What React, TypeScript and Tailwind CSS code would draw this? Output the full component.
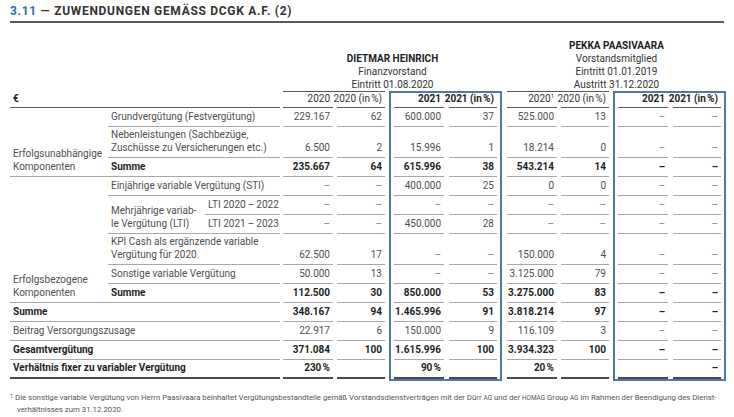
const H = [
  "h-[19px]",
  "h-[31px]",
  "h-[19px]",
  "h-[19px]",
  "h-[19px]",
  "h-[19px]",
  "h-[31px]",
  "h-[19px]",
  "h-[19px]",
  "h-[19px]",
  "h-[19px]",
  "h-[19px]",
  "h-[19px]",
];
const BOLD = [false, false, true, false, false, false, false, false, true, true, false, true, true];

const line = "border-b border-[#a8a8a8]";
const lastLine = "border-b-2 border-[#4a4a4a]";
const PCT = "2020 (in\u202F%)";
const PCT21 = "2021 (in\u202F%)";

const cols = {
  dh2020: ["229.167", "6.500", "235.667", "–", "–", "–", "62.500", "50.000", "112.500", "348.167", "22.917", "371.084", "230\u202F%"],
  dh2020p: ["62", "2", "64", "–", "–", "–", "17", "13", "30", "94", "6", "100", ""],
  dh2021: ["600.000", "15.996", "615.996", "400.000", "–", "450.000", "–", "–", "850.000", "1.465.996", "150.000", "1.615.996", "90\u202F%"],
  dh2021p: ["37", "1", "38", "25", "–", "28", "–", "–", "53", "91", "9", "100", ""],
  pp2020: ["525.000", "18.214", "543.214", "0", "–", "–", "150.000", "3.125.000", "3.275.000", "3.818.214", "116.109", "3.934.323", "20\u202F%"],
  pp2020p: ["13", "0", "14", "0", "–", "–", "4", "79", "83", "97", "3", "100", ""],
  pp2021: ["–", "–", "–", "–", "–", "–", "–", "–", "–", "–", "–", "–", ""],
  pp2021p: ["–", "–", "–", "–", "–", "–", "–", "–", "–", "–", "–", "–", "–"],
};

function NumCol({
  head,
  values,
  boldHead = false,
  inBox = false,
  width = "w-[50px]",
}: {
  head: React.ReactNode;
  values: string[];
  boldHead?: boolean;
  inBox?: boolean;
  width?: string;
}) {
  return (
    <div className={`flex flex-col ${width}`}>
      <div
        className={`flex items-end justify-end pr-[3px] pb-[2px] whitespace-nowrap border-b border-[#5a5a5a] ${
          inBox ? "h-[15px]" : "h-[16px]"
        } ${boldHead ? "font-bold text-[#1e1e1e]" : "text-[#333]"}`}
      >
        {head}
      </div>
      {values.map((v, i) => (
        <div
          key={i}
          className={`${H[i]} flex items-end justify-end pr-[3px] pb-[3px] whitespace-nowrap ${i === 12 ? lastLine : line} ${
            BOLD[i] ? "font-bold text-[#1e1e1e]" : v === "–" ? "text-[#8a8a8a]" : "text-[#4f4f4f]"
          }`}
        >
          {v}
        </div>
      ))}
    </div>
  );
}

function Box({ a, b }: { a: string[]; b: string[] }) {
  return (
    <div className="flex gap-[5px] px-[3px] border-2 border-[#4f7aa8]">
      <NumCol head="2021" values={a} boldHead inBox />
      <NumCol head={PCT21} values={b} boldHead inBox width="w-[48px]" />
    </div>
  );
}

function LabelCell({
  h,
  children,
  bold = false,
  last = false,
}: {
  h: string;
  children: React.ReactNode;
  bold?: boolean;
  last?: boolean;
}) {
  return (
    <div
      className={`${h} flex items-end pl-[3px] pb-[3px] whitespace-nowrap ${last ? lastLine : line} ${
        bold ? "font-bold text-[#1e1e1e]" : "text-[#4f4f4f]"
      }`}
    >
      <div>{children}</div>
    </div>
  );
}

export default function App() {
  return (
    <div className="w-[734px] h-[417px] bg-white overflow-hidden font-[Roboto,sans-serif] text-[10px] leading-[13px] text-[#555]">
      <div className="px-[10px] pt-[4px]">
        <div className="border-b-2 border-[#5a5a5a] pb-[3px] text-[12px] leading-[14px] font-bold tracking-[0.7px] text-[#333]">
          <span className="text-[#2f6ea6]">3.11</span> — ZUWENDUNGEN GEMÄSS DCGK A.F. (2)
        </div>
      </div>

      <div className="flex pl-[10px]">
        {/* labels */}
        <div className="flex flex-col w-[270px]">
          <div className="h-[68px]" />
          <div className="h-[17px] flex items-end pl-[3px] pb-[2px] border-b border-[#5a5a5a] font-bold text-[#1e1e1e]">
            €
          </div>
          <div className="flex">
            <div className="w-[98px]">
              <LabelCell h="h-[69px]">
                Erfolgsunabhängige
                <br />
                Komponenten
              </LabelCell>
            </div>
            <div className="flex flex-col flex-1">
              <LabelCell h={H[0]}>Grundvergütung (Festvergütung)</LabelCell>
              <LabelCell h={H[1]}>
                Nebenleistungen (Sachbezüge,
                <br />
                Zuschüsse zu Versicherungen etc.)
              </LabelCell>
              <LabelCell h={H[2]} bold>
                Summe
              </LabelCell>
            </div>
          </div>
          <div className="flex">
            <div className="w-[98px]">
              <LabelCell h="h-[126px]">
                Erfolgsbezogene
                <br />
                Komponenten
              </LabelCell>
            </div>
            <div className="flex flex-col flex-1">
              <LabelCell h={H[3]}>Einjährige variable Vergütung (STI)</LabelCell>
              <div className="flex">
                <div className="w-[97px]">
                  <LabelCell h="h-[38px]">
                    Mehrjährige variab-
                    <br />
                    le Vergütung (LTI)
                  </LabelCell>
                </div>
                <div className="flex flex-col flex-1">
                  <LabelCell h={H[4]}>LTI 2020{"\u2009–\u2009"}2022</LabelCell>
                  <LabelCell h={H[5]}>LTI 2021{"\u2009–\u2009"}2023</LabelCell>
                </div>
              </div>
              <LabelCell h={H[6]}>
                KPI Cash als ergänzende variable
                <br />
                Vergütung für 2020
              </LabelCell>
              <LabelCell h={H[7]}>Sonstige variable Vergütung</LabelCell>
              <LabelCell h={H[8]} bold>
                Summe
              </LabelCell>
            </div>
          </div>
          <LabelCell h={H[9]} bold>
            Summe
          </LabelCell>
          <LabelCell h={H[10]}>Beitrag Versorgungszusage</LabelCell>
          <LabelCell h={H[11]} bold>
            Gesamtvergütung
          </LabelCell>
          <LabelCell h={H[12]} bold last>
            Verhältnis fixer zu variabler Vergütung
          </LabelCell>
        </div>

        {/* Dietmar Heinrich */}
        <div className="flex flex-col w-[219px] ml-[3px]">
          <div className="h-[68px] flex flex-col items-center justify-end text-[#333]">
            <div className="font-bold text-[#1e1e1e]">DIETMAR HEINRICH</div>
            <div>Finanzvorstand</div>
            <div>Eintritt 01.08.2020</div>
          </div>
          <div className="flex gap-[4px]">
            <div className="flex gap-[4px] border-t border-[#5a5a5a]">
              <NumCol head="2020" values={cols.dh2020} />
              <NumCol head={PCT} values={cols.dh2020p} width="w-[48px]" />
            </div>
            <Box a={cols.dh2021} b={cols.dh2021p} />
          </div>
        </div>

        {/* Pekka Paasivaara */}
        <div className="flex flex-col w-[219px] ml-[5px]">
          <div className="h-[68px] flex flex-col items-center justify-end text-[#333]">
            <div className="font-bold text-[#1e1e1e]">PEKKA PAASIVAARA</div>
            <div>Vorstandsmitglied</div>
            <div>Eintritt 01.01.2019</div>
            <div>Austritt 31.12.2020</div>
          </div>
          <div className="flex gap-[4px]">
            <div className="flex gap-[4px] border-t border-[#5a5a5a]">
              <NumCol
                head={
                  <span>
                    2020<span className="text-[6px] align-top leading-[8px]">1</span>
                  </span>
                }
                values={cols.pp2020}
              />
              <NumCol head={PCT} values={cols.pp2020p} width="w-[48px]" />
            </div>
            <Box a={cols.pp2021} b={cols.pp2021p} />
          </div>
        </div>
      </div>

      <div className="mt-[11px] px-[10px] text-[7.8px] leading-[11px] text-[#555] whitespace-nowrap">
        <div>
          <span className="text-[5.5px] align-top leading-[8px]">1</span> Die sonstige variable Vergütung von Herrn
          Paasivaara beinhaltet Vergütungsbestandteile gemäß Vorstandsdienstverträgen mit der Dürr{" "}
          <span className="text-[6.4px]">AG</span> und der <span className="text-[6.4px]">HOMAG</span> Group{" "}
          <span className="text-[6.4px]">AG</span> im Rahmen der Beendigung des Dienst-
        </div>
        <div className="pl-[7px]">verhältnisses zum 31.12.2020.</div>
      </div>
    </div>
  );
}
